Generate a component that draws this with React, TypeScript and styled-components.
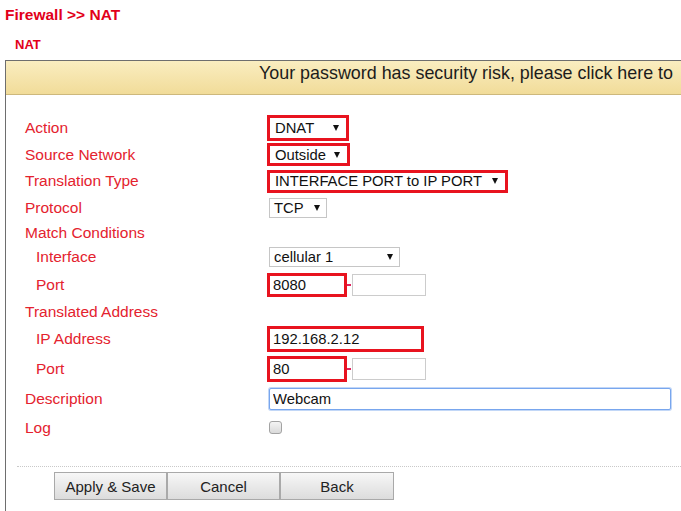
import React from 'react';
import styled, { createGlobalStyle } from 'styled-components';

const GlobalStyle = createGlobalStyle`
    html, body {
        margin: 0;
        padding: 0;
        background: #ffffff;
        overflow: hidden;
    }
    body {
        font-family: "Liberation Sans", Arial, sans-serif;
        color: #1a1a1a;
    }
`;

const RED = '#e8131f';
const LABEL_RED = '#e4222e';

const Page = styled.div`
    width: 681px;
    height: 511px;
    overflow: hidden;
`;

const Title = styled.div`
    padding: 6px 0 0 5px;
    font-size: 15.5px;
    line-height: 18px;
    font-weight: bold;
    color: #e2001a;
`;

const SubTitle = styled.div`
    margin-top: 13px;
    padding-left: 15px;
    font-size: 13px;
    line-height: 16px;
    font-weight: bold;
    color: #e2001a;
`;

const Frame = styled.div`
    margin: 7px 0 0 5px;
    border-left: 1px solid #6e6e6e;
    min-height: 460px;
`;

const Banner = styled.div`
    height: 35px;
    padding: 1px 0 0 253px;
    box-sizing: border-box;
    border-top: 1px solid #6e6e6e;
    border-bottom: 1px solid #cdb87c;
    background: linear-gradient(#faedc0, #f1dc99);
    font-size: 17.9px;
    line-height: 22px;
    white-space: nowrap;
    overflow: hidden;
    color: #1c1c1c;
`;

const Form = styled.div`
    padding: 19px 0 0 19px;
`;

const Row = styled.div<{ $h: number }>`
    display: grid;
    grid-template-columns: 242px 1fr;
    align-items: center;
    height: ${p => p.$h}px;
`;

const Label = styled.div<{ $sub?: boolean }>`
    padding-left: ${p => (p.$sub ? 11 : 0)}px;
    font-size: 15.5px;
    color: ${LABEL_RED};
    white-space: nowrap;
`;

const Cell = styled.div`
    display: flex;
    align-items: center;
`;

const SelectBox = styled.div<{ $w: number; $h: number; $hl?: boolean }>`
    display: flex;
    align-items: center;
    justify-content: space-between;
    box-sizing: border-box;
    width: ${p => p.$w}px;
    height: ${p => p.$h}px;
    margin-left: ${p => (p.$hl ? 0 : 2)}px;
    padding: ${p => (p.$hl ? '0 7px 0 5px' : '0 6px 0 4px')};
    border: ${p => (p.$hl ? `3px solid ${RED}` : '1px solid #c6c6c6')};
    background: #ffffff;
    font-size: 14.8px;
    color: #111111;
    white-space: nowrap;
`;

const Caret = styled.span`
    width: 0;
    height: 0;
    border-left: 3.5px solid transparent;
    border-right: 3.5px solid transparent;
    border-top: 6px solid #111111;
    margin-left: 6px;
`;

const TextInput = styled.input<{ $w: number; $h: number; $hl?: boolean; $focus?: boolean; $tight?: boolean }>`
    box-sizing: border-box;
    width: ${p => p.$w}px;
    height: ${p => p.$h}px;
    margin: 0 0 0 ${p => (p.$hl || p.$tight ? 0 : 2)}px;
    padding: 0 0 0 3px;
    border: ${p => (p.$hl ? `3px solid ${RED}` : p.$focus ? '1px solid #78a6ee' : '1px solid #cccccc')};
    border-radius: ${p => (p.$focus ? 2 : 0)}px;
    box-shadow: ${p => (p.$focus ? '0 0 0 1px rgba(120, 166, 238, 0.45)' : 'none')};
    background: #ffffff;
    font-family: "Liberation Sans", Arial, sans-serif;
    font-size: 14.8px;
    color: #111111;
    outline: none;
`;

const Dash = styled.span`
    width: 4px;
    height: 2px;
    margin-right: 1px;
    background: #e0245e;
`;

const Check = styled.input`
    appearance: none;
    width: 13px;
    height: 13px;
    margin: 0 0 0 2px;
    border: 1px solid #a3a3a3;
    border-radius: 3px;
    background: linear-gradient(#f4f4f4, #dadada);
`;

const Divider = styled.div`
    margin: 25px 0 0 11px;
    border-top: 1px dotted #c9c9c9;
`;

const ButtonBar = styled.div`
    display: flex;
    margin: 5px 0 0 48px;
`;

const Button = styled.button<{ $w: number }>`
    width: ${p => p.$w}px;
    height: 28px;
    padding: 0;
    border: 1px solid #a9a9a9;
    background: linear-gradient(#f7f7f7, #dcdcdc);
    font-family: "Liberation Sans", Arial, sans-serif;
    font-size: 15px;
    color: #222222;
`;

const Select = ({ value, w, h, hl }: { value: string; w: number; h: number; hl?: boolean }) => (
    <SelectBox $w={w} $h={h} $hl={hl}>
        <span>{value}</span>
        <Caret />
    </SelectBox>
);

const PortRange = ({ value, h }: { value: string; h: number }) => (
    <Cell>
        <TextInput $w={80} $h={h} $hl readOnly value={value} />
        <Dash />
        <TextInput $w={74} $h={22} $tight readOnly value="" />
    </Cell>
);

const App = () => {
    return (
        <Page>
            <GlobalStyle />
            <Title>Firewall &gt;&gt; NAT</Title>
            <SubTitle>NAT</SubTitle>
            <Frame>
                <Banner>Your password has security risk, please click here to</Banner>
                <Form>
                    <Row $h={27}>
                        <Label>Action</Label>
                        <Cell><Select value="DNAT" w={82} h={26} hl /></Cell>
                    </Row>
                    <Row $h={27}>
                        <Label>Source Network</Label>
                        <Cell><Select value="Outside" w={83} h={23} hl /></Cell>
                    </Row>
                    <Row $h={26}>
                        <Label>Translation Type</Label>
                        <Cell><Select value="INTERFACE PORT to IP PORT" w={241} h={23} hl /></Cell>
                    </Row>
                    <Row $h={27}>
                        <Label>Protocol</Label>
                        <Cell><Select value="TCP" w={58} h={20} /></Cell>
                    </Row>
                    <Row $h={23}>
                        <Label>Match Conditions</Label>
                        <Cell />
                    </Row>
                    <Row $h={26}>
                        <Label $sub>Interface</Label>
                        <Cell><Select value="cellular 1" w={131} h={20} /></Cell>
                    </Row>
                    <Row $h={30}>
                        <Label $sub>Port</Label>
                        <PortRange value="8080" h={24} />
                    </Row>
                    <Row $h={24}>
                        <Label>Translated Address</Label>
                        <Cell />
                    </Row>
                    <Row $h={30}>
                        <Label $sub>IP Address</Label>
                        <Cell><TextInput $w={157} $h={26} $hl readOnly value="192.168.2.12" /></Cell>
                    </Row>
                    <Row $h={30}>
                        <Label $sub>Port</Label>
                        <PortRange value="80" h={26} />
                    </Row>
                    <Row $h={30}>
                        <Label>Description</Label>
                        <Cell><TextInput $w={402} $h={22} $focus readOnly value="Webcam" /></Cell>
                    </Row>
                    <Row $h={27}>
                        <Label>Log</Label>
                        <Cell><Check type="checkbox" readOnly /></Cell>
                    </Row>
                </Form>
                <Divider />
                <ButtonBar>
                    <Button $w={113}>Apply &amp; Save</Button>
                    <Button $w={113}>Cancel</Button>
                    <Button $w={114}>Back</Button>
                </ButtonBar>
            </Frame>
        </Page>
    );
};

export default App;
